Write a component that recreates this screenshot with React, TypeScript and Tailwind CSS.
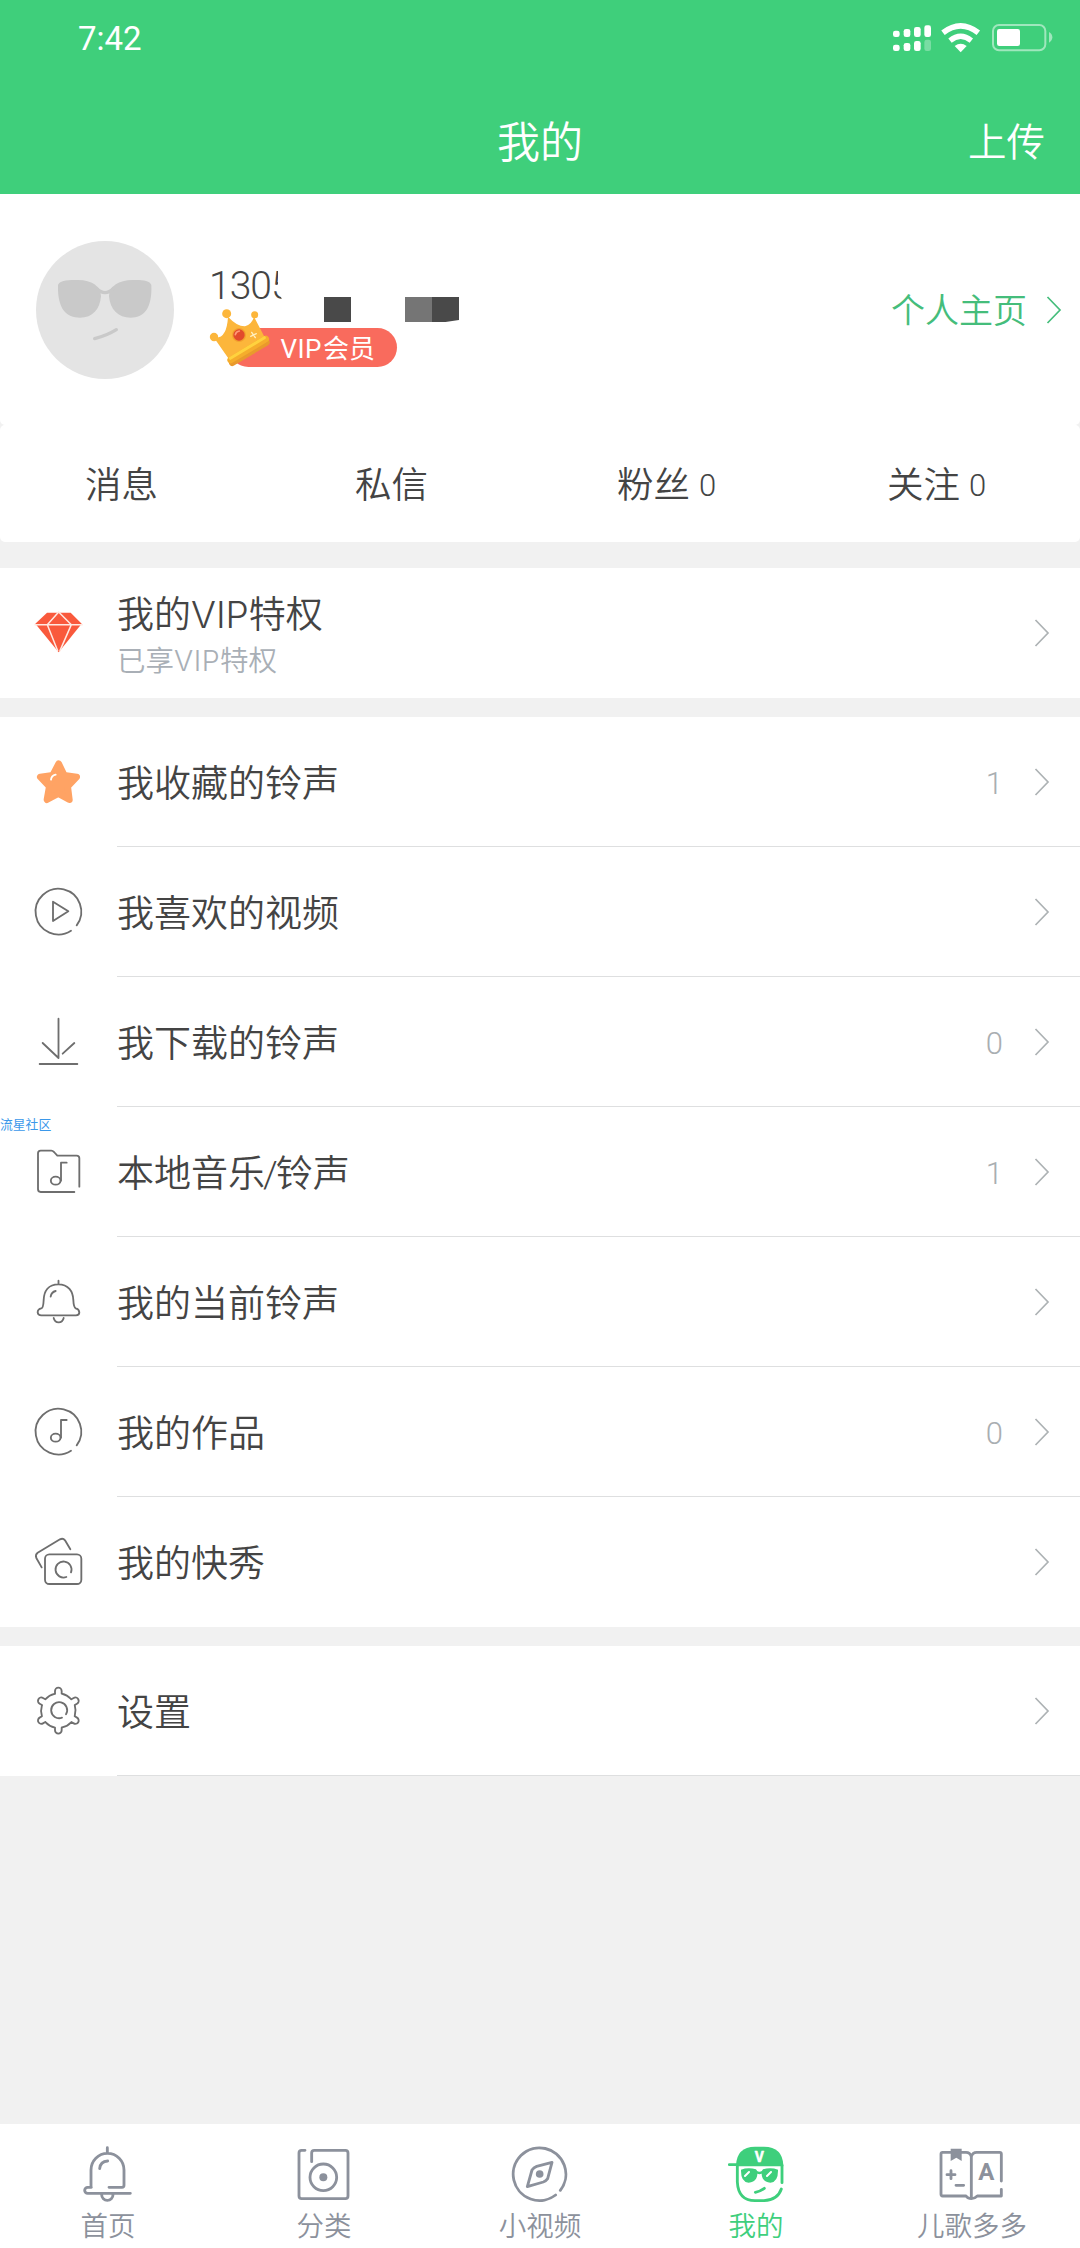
import type { ReactNode } from "react";

function Chevron({ className }: { className: string }) {
  return (
    <svg viewBox="0 0 16 30" className={`h-[30px] w-4 shrink-0 ${className}`} fill="none" stroke="currentColor" strokeWidth="1.7">
      <path d="M1.5 2L14 15L1.5 28" />
    </svg>
  );
}

function RowIcon({ top, children }: { top: number; children: ReactNode }) {
  return (
    <svg
      viewBox={`84 ${top} 180 180`}
      className="h-[60px] w-[60px] shrink-0 text-[#6e6e6e]"
      fill="none"
      stroke="currentColor"
      strokeWidth="5.5"
      strokeLinecap="round"
      strokeLinejoin="round"
    >
      {children}
    </svg>
  );
}

const diamond = (
  <RowIcon top={549}>
    <path d="M141 578H212L245 611L176 697L106 611Z" fill="#f9593c" stroke="none" />
    <path d="M105 614H247M176 576L142 614L173 692M176 576L214 614L180 692" stroke="#ffe9e2" strokeWidth="4.5" />
  </RowIcon>
);
const star = (
  <RowIcon top={156}>
    <path
      d="M176 191L193 226L230 231L203 259L208 299L175 281L141 299L148 259L121 231L158 226Z"
      fill="#ffa364"
      stroke="#ffa364"
      strokeWidth="20"
    />
    <path d="M153 239Q154 227 167 224" stroke="#fff" />
  </RowIcon>
);
const play = (
  <RowIcon top={546}>
    <path d="M230 676A68.5 68.5 0 1 0 213 692M159 605L205 634L159 663Z" />
  </RowIcon>
);
const download = (
  <RowIcon top={936}>
    <path d="M175.500 956V1074L128 1029M223 1029L188 1061M119 1092H232" />
  </RowIcon>
);
const folder = (
  <RowIcon top={186}>
    <path d="M223 336H122q-8 0-8-8V220q0-8 8-8H154Q158 212 162 216L172 227H230q8 0 8 8V320M200 248H183V302" />
    <ellipse cx="167" cy="302" rx="14.5" ry="12" />
  </RowIcon>
);
const bell = (
  <RowIcon top={576}>
    <path d="M175.500 602v10M175 613C145 613 132 634 131 660Q130 684 124 685Q113 687 113 697Q114 706 124 706H228Q238 706 238 697Q237 687 227 685Q221 682 220 660C219 634 205 613 175 613ZM161 714Q164 727 176 727Q188 727 191 714M152 650Q154 636 167 633" />
  </RowIcon>
);
const disc = (
  <RowIcon top={966}>
    <path d="M230 1096A68.5 68.5 0 1 0 213 1112M200 1020H183V1073" />
    <ellipse cx="167" cy="1073" rx="14.5" ry="12" />
  </RowIcon>
);
const photos = (
  <RowIcon top={456}>
    <rect x="135" y="523" width="109" height="89" rx="13" />
    <path d="M125 562L109 534Q105 524 113 518L180 478Q189 473 195 481L211 508M213 577A24 24 0 1 0 199 591" />
  </RowIcon>
);
const gear = (
  <RowIcon top={903}>
    <path d="M198 1003A24 24 0 1 0 186 1013" />
    {[0, 60, 120, 180, 240, 300].map((a) => (
      <path key={a} d="M165 941V933a10 10 0 0 1 20 0V941Q202 945 213 957" transform={`rotate(${a} 175 992)`} />
    ))}
  </RowIcon>
);

function Row({ icon, label, count, last }: { icon: ReactNode; label: ReactNode; count?: string; last?: boolean }) {
  return (
    <div className="flex h-[130px] items-center bg-white pl-7">
      {icon}
      <div className={`ml-[29px] flex h-full flex-1 items-center border-b pr-[30px] ${last ? "border-transparent" : "border-[#dedfe0]"}`}>
        <span className="flex-1 pt-[7px] text-[37px] leading-[54px]">{label}</span>
        <span className="mr-[31px] pt-[5px] text-[31px] text-[#a9aeb2]">{count}</span>
        <Chevron className="text-[#adb2b4]" />
      </div>
    </div>
  );
}

function StatusIcons() {
  return (
    <svg viewBox="90 60 495 105" className="h-[35px] w-[165px]" fill="#fff">
      <rect x="99" y="92" width="20" height="19" rx="7" />
      <rect x="131" y="87" width="20" height="24" rx="7" />
      <rect x="162" y="81" width="20" height="30" rx="7" />
      <rect x="193" y="76" width="20" height="35" rx="7" />
      <rect x="99" y="134" width="20" height="19" rx="7" />
      <rect x="131" y="129" width="20" height="24" rx="7" />
      <rect x="162" y="123" width="20" height="30" rx="7" />
      <rect x="193" y="119" width="20" height="34" rx="7" opacity=".3" />
      <path d="M249 98Q302 57 355 98" fill="none" stroke="#fff" strokeWidth="17" />
      <path d="M270 122Q302 96 334 122" fill="none" stroke="#fff" strokeWidth="16" />
      <path d="M284 138Q302 125 320 138L302 157Z" />
      <rect x="399" y="75" width="157" height="76" rx="18" fill="none" stroke="#fff" strokeWidth="6" opacity=".5" />
      <rect x="411" y="87" width="69" height="51" rx="7" />
      <path d="M567 96Q577 102 577 112T567 128Z" opacity=".5" />
    </svg>
  );
}

function Avatar() {
  return (
    <svg viewBox="108 120 414 414" className="h-[138px] w-[138px] shrink-0">
      <circle cx="315" cy="327" r="207" fill="#e4e4e4" />
      <g fill="#c9c9c9">
        <path d="M174 252C178 238 205 236 235 237C275 238 302 255 303 285C300 325 278 350 240 350C200 350 172 325 174 252Z" />
        <path d="M454 252C450 238 425 236 397 237C357 238 328 255 327 285C330 325 354 350 392 350C430 350 457 325 454 252Z" />
      </g>
      <path d="M290 262Q315 288 340 262M284 413Q320 404 349 386" fill="none" stroke="#c9c9c9" strokeWidth="10" strokeLinecap="round" />
    </svg>
  );
}

function Crown() {
  return (
    <svg viewBox="615 315 210 195" className="absolute -left-[5px] -top-[23px] h-[65px] w-[70px]">
      <g fill="#fcb63b">
        <circle cx="680" cy="341" r="13.500" />
        <circle cx="764" cy="344" r="10.500" />
        <circle cx="642" cy="411" r="12.500" />
        <path d="M641 412Q680 420 684 350Q712 380 735 379Q756 372 762 350L794 412L686 476Z" />
      </g>
      <path d="M697 488L799 427" stroke="#e99a2c" strokeWidth="20" strokeLinecap="round" />
      <path d="M692 480L797 417" stroke="#f5ad2c" strokeWidth="20" strokeLinecap="round" />
      <path d="M691 475L793 413" stroke="#ffd23e" strokeWidth="9" strokeLinecap="round" />
      <circle cx="717" cy="405" r="21" fill="#f2a12e" />
      <circle cx="717" cy="405" r="17" fill="#e2492c" />
      <path d="M706 404Q708 394 718 393" stroke="#ff9a78" strokeWidth="5" fill="none" strokeLinecap="round" />
      <path d="M755 397L766 413M752 409L769 401" stroke="#fff0c0" strokeWidth="4" strokeLinecap="round" />
    </svg>
  );
}

const stats = [
  { label: "消息", count: "", pad: "pr-[27px]" },
  { label: "私信", count: "", pad: "pr-[27px]" },
  { label: "粉丝", count: "0", pad: "pr-[17px]" },
  { label: "关注", count: "0", pad: "pr-[17px]" },
];

function Tab({ label, active, viewBox, wide, children }: { label: string; active?: boolean; viewBox: string; wide?: boolean; children: ReactNode }) {
  return (
    <div className={`flex flex-1 flex-col items-center pt-[22px] ${active ? "text-[#3ecf7c]" : "text-[#8c919c]"}`}>
      <svg
        viewBox={viewBox}
        className={`h-[60px] shrink-0 ${wide ? "w-[66px]" : "w-[60px]"}`}
        fill="none"
        stroke="currentColor"
        strokeWidth="8.5"
        strokeLinecap="round"
        strokeLinejoin="round"
      >
        {children}
      </svg>
      <span className="mt-px text-[27.5px] leading-10">{label}</span>
    </div>
  );
}

export default function App() {
  return (
    <div className="relative flex h-[2248px] w-[1080px] flex-col overflow-hidden bg-[#f1f1f1] font-['Roboto','Noto_Sans_CJK_SC',sans-serif] font-[350] text-[#444444]">
      <header className="h-[194px] shrink-0 bg-[#3fcf7b] text-white">
        <div className="flex h-[75px] items-center justify-between pl-[78px] pr-[25px] font-normal">
          <span className="pt-[2px] text-[33px]">7:42</span>
          <StatusIcons />
        </div>
        <div className="grid h-[119px] grid-cols-3 items-center pt-[7px]">
          <span />
          <h1 className="pt-[10px] text-center text-[43px]">我的</h1>
          <span className="pr-[35px] pt-[10px] text-right text-[38.500px]">上传</span>
        </div>
      </header>

      <section className="flex h-[231px] shrink-0 items-center rounded-b-[5px] bg-white pl-9 pr-[18px]">
        <Avatar />
        <div className="ml-9 flex-1 self-start pt-[68px]">
          <div className="flex h-[47px]">
            <div className="w-[71px] pt-px">
              <span className="-ml-px block w-[90px] text-[39px] leading-[47px] tracking-[-1px] [clip-path:polygon(0_0,69px_0,69px_55%,73px_78%,73px_100%,0_100%)]">1305</span>
            </div>
            <div className="ml-[43px] mt-[35px] h-[25px] w-[27px] bg-[#494949]" />
            <div className="ml-[54px] mt-[35px] h-[25px] w-[27px] bg-[#757575]" />
            <div className="mt-[35px] h-[25px] w-[27px] bg-[#494949] [clip-path:polygon(0_0,100%_0,100%_92%,50%_100%,0_100%)]" />
          </div>
          <div className="relative mt-[19px] flex h-[39px] items-center pl-[19px]">
            <div className="flex h-[39px] w-[168px] items-center justify-end rounded-full bg-[#f96b5d] pr-[22px] pt-[3px] text-[26px] font-normal text-white">
              <span className="mr-px tracking-[0.500px]">VIP</span>会员
            </div>
            <Crown />
          </div>
        </div>
        <span className="pt-[3px] text-[34px] text-[#45bd7b]">个人主页</span>
        <Chevron className="ml-[19px] text-[#45bd7b]" />
      </section>

      <nav className="grid h-[117px] shrink-0 grid-cols-4 items-center rounded-[5px] bg-white pt-[5px]">
        {stats.map((s) => (
          <div key={s.label} className={`flex items-center justify-center gap-[9px] text-[36.5px] ${s.pad}`}>
            {s.label}
            {s.count && <span className="text-[31px]">{s.count}</span>}
          </div>
        ))}
      </nav>

      <section className="mt-[26px] flex h-[130px] shrink-0 items-center bg-white pl-7 pr-[30px]">
        {diamond}
        <div className="ml-[29px] flex-1 pt-[5px]">
          <div className="text-[37px] leading-[50px]">
            我的<span className="font-['Inter'] font-light">VIP</span>特权
          </div>
          <div className="text-[28.5px] leading-10 text-[#a9afb6]">
            已享<span className="font-['Inter'] font-light tracking-[0.500px]">VIP</span>特权
          </div>
        </div>
        <Chevron className="text-[#adb2b4]" />
      </section>

      <section className="mt-[19px] shrink-0">
        <Row icon={star} label="我收藏的铃声" count="1" />
        <Row icon={play} label="我喜欢的视频" />
        <Row icon={download} label="我下载的铃声" count="0" />
        <Row
          icon={folder}
          label={
            <>
              本地音乐<span className="-mx-[2px]">/</span>铃声
            </>
          }
          count="1"
        />
        <Row icon={bell} label="我的当前铃声" />
        <Row icon={disc} label="我的作品" count="0" />
        <Row icon={photos} label="我的快秀" last />
      </section>

      <section className="mt-[19px] shrink-0">
        <Row icon={gear} label="设置" />
      </section>

      <footer className="mt-auto flex h-[124px] shrink-0 bg-white">
        <Tab label="首页" viewBox="234 108 180 180">
          <path d="M322 113v14M273 232V180a49.500 50 0 0 1 99 0V226q0 6-6 6H327M274 232H263a9 9 0 0 0 0 18H391M305 254a17 17 0 0 0 34 0M299 176Q301 154 323 153" />
        </Tab>
        <Tab label="分类" viewBox="882 108 180 180">
          <path d="M915 121H905a8 8 0 0 0-8 8V258a8 8 0 0 0 8 8H1036a8 8 0 0 0 8-8V129a8 8 0 0 0-8-8H943a8 8 0 0 0-8 8V155" />
          <circle cx="970" cy="202" r="40" />
          <circle cx="970" cy="202" r="12" fill="currentColor" stroke="none" />
        </Tab>
        <Tab label="小视频" viewBox="30 48 180 180">
          <path d="M181 181A79 79 0 1 0 167 195M156 97L143 146Q138 153 130 156L82 170L96 120Q101 112 110 109Z" />
          <circle cx="119" cy="132" r="11.500" fill="currentColor" stroke="none" />
        </Tab>
        <Tab label="我的" active viewBox="678 48 180 180">
          <path d="M708 109V106Q710 51 765 50H792Q848 51 850 106V109Z" fill="currentColor" stroke="none" />
          <path d="M688 104H712M712 106V156Q715 212 765 212H792Q833 210 844 177M846 106V158" />
          <path d="M723 119Q745 111 768 118Q776 126 769 145Q761 158 746 158Q722 156 723 119ZM834 119Q812 111 789 118Q781 126 788 145Q796 158 811 158Q835 156 834 119Z" fill="currentColor" stroke="none" />
          <path d="M768 125Q778 133 789 125" strokeWidth="7" />
          <path d="M735 138L747 126M801 138L813 126" stroke="#fff" strokeWidth="6" />
          <path d="M766 187Q781 184 793 175" />
          <text x="778" y="97" textAnchor="middle" fontSize="42" fontWeight="700" fill="#fff" stroke="#fff" strokeWidth="1.5">V</text>
        </Tab>
        <Tab label="儿歌多多" wide viewBox="1197 108 198 180">
          <path d="M1294 262V140Q1290 127 1278 127H1208q-5 0-5 5V253q0 5 5 5H1278Q1284 266 1294 266Q1304 266 1312 258H1384V238M1384 213V132q0-5-5-5H1310Q1298 127 1294 140" />
          <path d="M1232 116h33v37l-16-10-17 10z" fill="currentColor" stroke="none" />
          <path d="M1221 194H1245M1233 182V206M1248 226H1271" />
          <text x="1339" y="209" textAnchor="middle" fontSize="72" fontWeight="700" fill="currentColor" stroke="none">A</text>
        </Tab>
      </footer>

      <div className="absolute left-0 top-[1115px] text-[12.8px] font-normal leading-5 text-[#3b98ea]">流星社区</div>
    </div>
  );
}
